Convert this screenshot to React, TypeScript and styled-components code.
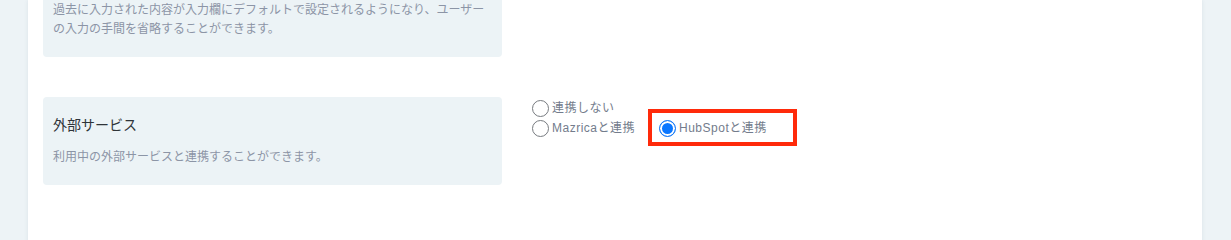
import React from "react";
import styled, { createGlobalStyle } from "styled-components";

const GlobalStyle = createGlobalStyle`
  html, body {
    margin: 0;
    padding: 0;
    background: #edf3f6;
    font-family: "Liberation Sans", "Noto Sans CJK JP", sans-serif;
    overflow: hidden;
  }
`;

interface Option {
  value: string;
  label: string;
  highlighted?: boolean;
}

const options: Option[][] = [
  [{ value: "none", label: "連携しない" }],
  [
    { value: "mazrica", label: "Mazricaと連携" },
    { value: "hubspot", label: "HubSpotと連携", highlighted: true },
  ],
];

const App = () => {
  return (
    <>
      <GlobalStyle />
      <S.Page>
        <S.Panel>
          <S.Content>
            <S.Row>
              <S.Card>
                <S.Title>入力内容の保持</S.Title>
                <S.Description>
                  過去に入力された内容が入力欄にデフォルトで設定されるようになり、ユーザーの入力の手間を省略することができます。
                </S.Description>
              </S.Card>
            </S.Row>
            <S.Row>
              <S.Card>
                <S.Title>外部サービス</S.Title>
                <S.Description>
                  利用中の外部サービスと連携することができます。
                </S.Description>
              </S.Card>
              <S.RadioGroup>
                {options.map((line, i) => (
                  <S.RadioLine key={i}>
                    {line.map((opt) => (
                      <S.Option key={opt.value} $highlighted={opt.highlighted}>
                        <S.Radio
                          type="radio"
                          name="service"
                          value={opt.value}
                          defaultChecked={opt.value === "hubspot"}
                        />
                        <S.OptionText>{opt.label}</S.OptionText>
                      </S.Option>
                    ))}
                  </S.RadioLine>
                ))}
              </S.RadioGroup>
            </S.Row>
          </S.Content>
        </S.Panel>
      </S.Page>
    </>
  );
};

namespace S {
  export const Page = styled.div`
    height: 100vh;
    padding-left: 28px;
    overflow: hidden;
  `;

  export const Panel = styled.div`
    display: flow-root;
    width: 1174px;
    min-height: calc(100vh + 100px);
    background: #ffffff;
    box-shadow: 0 0 4px rgba(60, 90, 110, 0.1);
  `;

  export const Content = styled.div`
    display: flex;
    flex-direction: column;
    gap: 40px;
    padding-left: 15px;
    margin-top: -50px;
  `;

  export const Row = styled.div`
    display: flex;
    align-items: flex-start;
    gap: 30px;
  `;

  export const Card = styled.div`
    width: 459px;
    box-sizing: border-box;
    padding: 18px 10px 18px;
    background: #ecf3f6;
    border-radius: 4px;
    display: flex;
    flex-direction: column;
    gap: 13px;
  `;

  export const Title = styled.h3`
    margin: 0;
    font-size: 14px;
    line-height: 20px;
    font-weight: 400;
    color: #2f3439;
  `;

  export const Description = styled.p`
    margin: 0;
    font-size: 12px;
    line-height: 19px;
    color: #8c95a6;
  `;

  export const RadioGroup = styled.div`
    display: flex;
    flex-direction: column;
    gap: 2px;
    padding-top: 2px;
  `;

  export const RadioLine = styled.div`
    display: flex;
    align-items: center;
    gap: 24px;
  `;

  export const Option = styled.label<{ $highlighted?: boolean }>`
    position: relative;
    display: flex;
    align-items: center;
    gap: 3px;
    cursor: pointer;

    &::after {
      content: "";
      display: ${(props) => (props.$highlighted ? "block" : "none")};
      position: absolute;
      left: -11px;
      top: -10px;
      width: 149px;
      height: 37px;
      box-sizing: border-box;
      border: 4px solid #ff2a0a;
      pointer-events: none;
    }
  `;

  export const Radio = styled.input`
    appearance: none;
    margin: 0;
    width: 17px;
    height: 17px;
    border-radius: 50%;
    border: 1px solid #777b80;
    background: #ffffff;
    box-sizing: border-box;
    flex-shrink: 0;

    &:checked {
      border-color: #1a7cf5;
      background: #0a77ff;
      box-shadow: inset 0 0 0 2px #ffffff;
    }
  `;

  export const OptionText = styled.span`
    font-size: 12px;
    line-height: 18px;
    letter-spacing: 0.5px;
    color: #737c8c;
  `;
}

export default App;
